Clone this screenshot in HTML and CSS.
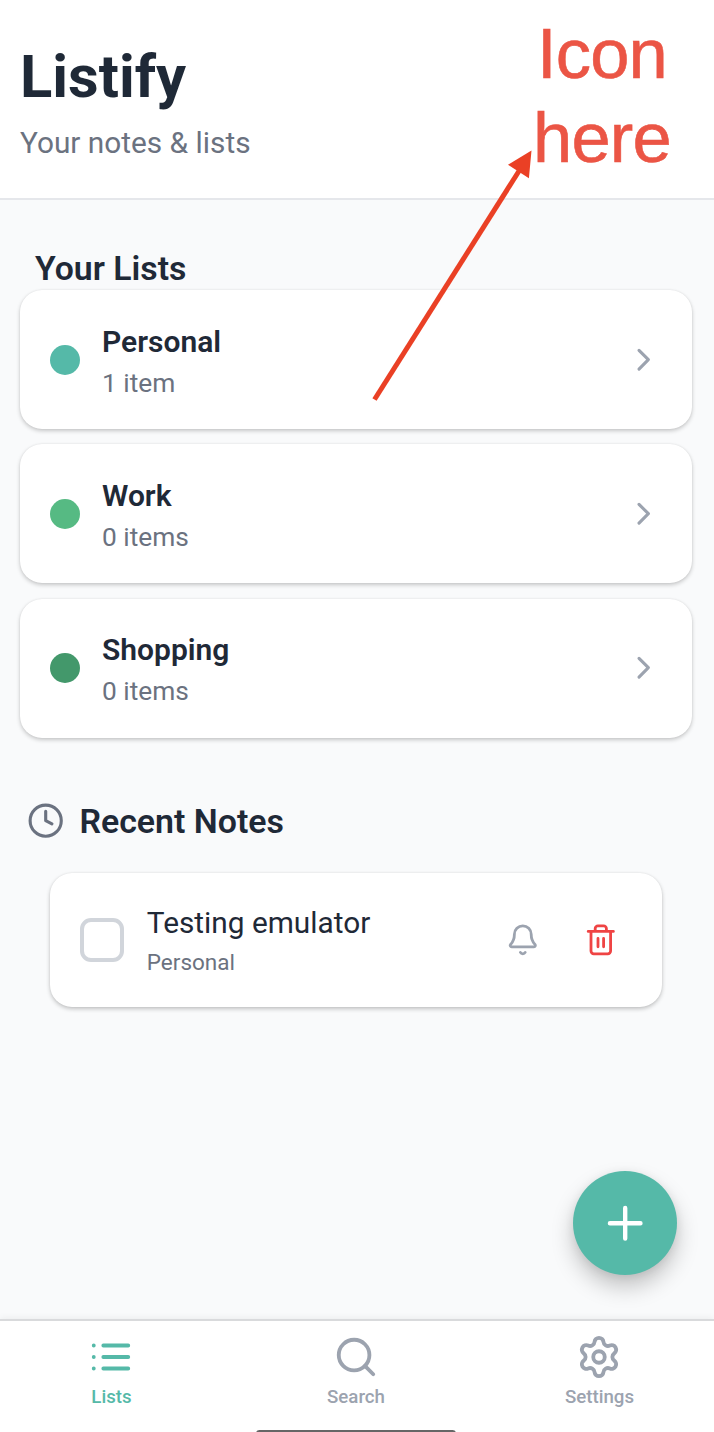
FILE: index.html
```html
<!DOCTYPE html>
<html lang="en">
<head>
<meta charset="utf-8">
<title>Listify</title>
<link rel="stylesheet" href="styles.css">
</head>
<body>
<div class="app">
  <header class="header">
    <h1 class="title">Listify</h1>
    <p class="subtitle">Your notes &amp; lists</p>
  </header>

  <main class="content">
    <h2 class="section-title">Your Lists</h2>
    <div class="lists">
      <div class="card">
        <span class="dot dot-teal"></span>
        <div class="card-text"><div class="card-name">Personal</div><div class="card-count">1 item</div></div>
        <svg class="icon icon-20" viewBox="0 0 24 24"><path d="m9 18 6-6-6-6"/></svg>
      </div>
      <div class="card">
        <span class="dot dot-green"></span>
        <div class="card-text"><div class="card-name">Work</div><div class="card-count">0 items</div></div>
        <svg class="icon icon-20" viewBox="0 0 24 24"><path d="m9 18 6-6-6-6"/></svg>
      </div>
      <div class="card">
        <span class="dot dot-forest"></span>
        <div class="card-text"><div class="card-name">Shopping</div><div class="card-count">0 items</div></div>
        <svg class="icon icon-20" viewBox="0 0 24 24"><path d="m9 18 6-6-6-6"/></svg>
      </div>
    </div>

    <div class="recent-head">
      <svg class="icon icon-20 icon-slate" viewBox="0 0 24 24"><circle cx="12" cy="12" r="10"/><path d="M12 6v6l4 2"/></svg>
      <h2 class="recent-title">Recent Notes</h2>
    </div>
    <div class="note">
      <span class="checkbox"></span>
      <div class="note-text"><div class="note-name">Testing emulator</div><div class="note-list">Personal</div></div>
      <div class="note-actions">
        <svg class="icon icon-18" viewBox="0 0 24 24"><path d="M10.268 21a2 2 0 0 0 3.464 0"/><path d="M3.262 15.326A1 1 0 0 0 4 17h16a1 1 0 0 0 .74-1.673C19.41 13.956 18 12.499 18 8A6 6 0 0 0 6 8c0 4.499-1.411 5.956-2.738 7.326"/></svg>
        <svg class="icon icon-18 icon-red" viewBox="0 0 24 24"><path d="M3 6h18M19 6v14a2 2 0 0 1-2 2H7a2 2 0 0 1-2-2V6M8 6V4a2 2 0 0 1 2-2h4a2 2 0 0 1 2 2v2M10 11v6M14 11v6"/></svg>
      </div>
    </div>
  </main>

  <nav class="tabs">
    <div class="tab tab-active">
      <svg class="icon icon-tab" viewBox="0 0 24 24"><path d="M3 6h.01M3 12h.01M3 18h.01M8 6h13M8 12h13M8 18h13"/></svg>
      <span class="tab-label">Lists</span>
    </div>
    <div class="tab">
      <svg class="icon icon-tab" viewBox="0 0 24 24"><circle cx="11" cy="11" r="8"/><path d="m21 21-4.34-4.34"/></svg>
      <span class="tab-label">Search</span>
    </div>
    <div class="tab">
      <svg class="icon icon-tab" viewBox="0 0 24 24"><path d="M9.671 4.136a2.34 2.34 0 0 1 4.659 0 2.34 2.34 0 0 0 3.319 1.915 2.34 2.34 0 0 1 2.33 4.033 2.34 2.34 0 0 0 0 3.831 2.34 2.34 0 0 1-2.33 4.033 2.34 2.34 0 0 0-3.319 1.915 2.34 2.34 0 0 1-4.659 0 2.34 2.34 0 0 0-3.32-1.915 2.34 2.34 0 0 1-2.33-4.033 2.34 2.34 0 0 0 0-3.831A2.34 2.34 0 0 1 6.35 6.051a2.34 2.34 0 0 0 3.319-1.915"/><circle cx="12" cy="12" r="3"/></svg>
      <span class="tab-label">Settings</span>
    </div>
  </nav>

  <div class="fab"><svg class="icon icon-fab" viewBox="0 0 24 24"><path d="M5 12h14M12 5v14"/></svg></div>
  <span class="home-bar"></span>
  <div class="callout">Icon<br>here</div>
  <svg class="arrow" viewBox="0 0 170 256"><path class="arrow-line" d="M4.500 250.500 149 22"/><path class="arrow-head" d="M161.500 1.500 138 15.800 158.900 29.200z"/></svg>
</div>
</body>
</html>
```
FILE: styles.css
```css
* { box-sizing: border-box; }
body { margin: 0; }
h1, h2, p { margin: 0; }

.app {
  position: relative;
  display: flex;
  flex-direction: column;
  width: 714px;
  height: 1432px;
  overflow: hidden;
  background: #f9fafb;
  color: #1f2937;
  font-family: Roboto, sans-serif;
  white-space: nowrap;
}

.header {
  height: 200px;
  padding: 42px 20px 0;
  background: #fff;
  border-bottom: 2px solid #e5e7eb;
}
.title { font-size: 59.700px; line-height: 70px; font-weight: 700; }
.subtitle { margin-top: 13px; font-size: 29.800px; line-height: 35px; color: #6b7280; }

.content { flex: 1; padding: 48px 22px 0 20px; }
.section-title { padding: 0 0 1px 15px; font-size: 33.800px; line-height: 41px; font-weight: 600; }

.lists { display: flex; flex-direction: column; gap: 15.300px; }
.card {
  display: flex;
  align-items: center;
  height: 139px;
  padding: 0 30px 0 29.500px;
  background: #fff;
  border-radius: 22px;
  box-shadow: 0 2px 4px rgba(0, 0, 0, .2), 0 0 2px rgba(0, 0, 0, .08);
}
.dot { width: 30px; height: 30px; margin-right: 22.500px; border-radius: 50%; }
.dot-teal { background: #55b9a8; }
.dot-green { background: #56ba83; }
.dot-forest { background: #43986b; }
.card-text { flex: 1; padding-top: 3px; }
.card-name { font-size: 30px; line-height: 38px; font-weight: 600; }
.card-count { margin-top: 5px; font-size: 26.300px; line-height: 34px; color: #6b7280; }

.icon {
  display: block;
  flex: none;
  fill: none;
  stroke: #9ca3af;
  stroke-width: 2;
  stroke-linecap: round;
  stroke-linejoin: round;
}
.icon-20 { width: 37.400px; height: 37.400px; }
.icon-18 { width: 33.600px; height: 33.600px; }
.icon-tab { width: 46px; height: 46px; margin-left: -1px; }
.icon-fab { width: 52.400px; height: 52.400px; stroke: #fff; }
.icon-slate { stroke: #6b7280; }
.icon-red { stroke: #ef4444; }

.recent-head { display: flex; align-items: center; gap: 15px; margin-top: 62px; padding-left: 7px; height: 42px; }
.recent-title { padding-top: 2px; font-size: 33.900px; line-height: 42px; font-weight: 600; }

.note {
  display: flex;
  align-items: center;
  height: 134px;
  margin: 31.400px 30px 0;
  padding: 0 44px 0 29.500px;
  background: #fff;
  border-radius: 22px;
  box-shadow: 0 2px 4px rgba(0, 0, 0, .22), 0 0 2px rgba(0, 0, 0, .08);
}
.checkbox { width: 44.800px; height: 44.800px; margin-right: 22.500px; border: 4px solid #d1d5db; border-radius: 11px; }
.note-text { flex: 1; }
.note-name { font-size: 29.800px; line-height: 40px; }
.note-list { margin-top: 4px; font-size: 22.500px; line-height: 30px; color: #6b7280; }
.note-actions { display: flex; gap: 45px; }

.tabs {
  display: grid;
  grid-template-columns: 223px 266px 221px;
  height: 113px;
  padding-top: 13px;
  background: #fff;
  border-top: 2px solid #d9dadc;
  box-shadow: 0 -1px 7px rgba(0, 0, 0, .06);
}
.tab { display: flex; flex-direction: column; align-items: center; color: #9ca3af; }
.tab-label { margin-top: 5px; font-size: 18.7px; line-height: 24px; font-weight: 500; }
.tab-active { color: #55b9a8; }
.tab-active .icon { stroke: #55b9a8; }

.fab {
  position: absolute;
  left: 573px;
  top: 1171px;
  display: grid;
  place-items: center;
  width: 104px;
  height: 104px;
  border-radius: 50%;
  background: #55b9a8;
  box-shadow: 0 12px 22px rgba(0, 0, 0, .22), 0 2px 10px rgba(0, 0, 0, .08);
}
.home-bar {
  position: absolute;
  left: 256px;
  top: 1430px;
  width: 200px;
  height: 7px;
  border-radius: 4px;
  background: #666;
}
.callout {
  position: absolute;
  left: 532px;
  top: 12px;
  width: 140px;
  text-align: center;
  font: 70.500px/84px "Liberation Sans", Arial, sans-serif;
  letter-spacing: -.8px;
  color: #eb5545;
  -webkit-text-stroke: .6px #eb5545;
}
.arrow { position: absolute; left: 370px; top: 149px; width: 170px; height: 256px; }
.arrow-line { fill: none; stroke: #ea4025; stroke-width: 5; }
.arrow-head { fill: #ea4025; }
```
